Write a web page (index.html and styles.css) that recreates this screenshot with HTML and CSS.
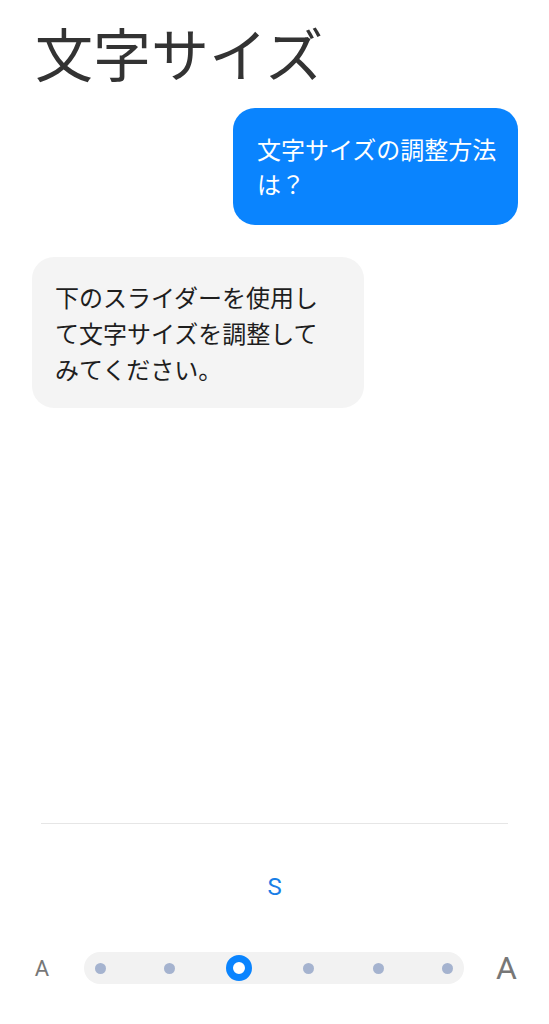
FILE: index.html
```html
<!DOCTYPE html>
<html lang="ja">
<head>
<meta charset="utf-8">
<link rel="stylesheet" href="styles.css">
</head>
<body>
<div class="page">
  <h1 class="title">文字サイズ</h1>
  <div class="chat">
    <div class="bubble bubble-user">文字サイズの調整方法は？</div>
    <div class="bubble bubble-bot">下のスライダーを使用して文字サイズを調整してみてください。</div>
  </div>
  <div class="spacer"></div>
  <div class="footer">
    <div class="divider"></div>
    <div class="size-label">S</div>
    <div class="slider-row">
      <div class="a-small">A</div>
      <div class="track">
        <span class="cell"><span class="dot"></span></span>
        <span class="cell"><span class="dot"></span></span>
        <span class="cell"><span class="knob"></span></span>
        <span class="cell"><span class="dot"></span></span>
        <span class="cell"><span class="dot"></span></span>
        <span class="cell"><span class="dot"></span></span>
      </div>
      <div class="a-large">A</div>
    </div>
  </div>
</div>
</body>
</html>
```
FILE: styles.css
```css
* { box-sizing: border-box; }
html, body { margin: 0; padding: 0; background: #fff; }
body {
  font-family: "Noto Sans CJK JP", "Noto Sans", sans-serif;
  color: #222;
}
.page {
  height: 1024px;
  display: flex;
  flex-direction: column;
}
.title {
  margin: 17px 0 0 35px;
  font-size: 58px;
  line-height: 70px;
  font-weight: 400;
  color: #333;
}
.chat {
  display: flex;
  flex-direction: column;
  padding: 0 31px 0 32px;
  margin-top: 21px;
}
.bubble {
  font-size: 24px;
  border-radius: 22px;
}
.bubble-user {
  align-self: flex-end;
  width: 285px;
  background: #0a84fe;
  color: #fff;
  line-height: 35px;
  padding: 23px 20px 24px 24px;
}
.bubble-bot {
  align-self: flex-start;
  margin-top: 32px;
  width: 332px;
  background: #f4f4f4;
  color: #1e1e1e;
  line-height: 36px;
  padding: 22px 40px 21px 23px;
}
.spacer { flex: 1; }
.footer {
  display: flex;
  flex-direction: column;
  padding-bottom: 40px;
}
.divider {
  margin: 0 41px;
  border-top: 1px solid #e6e6e6;
}
.size-label {
  margin-top: 51px;
  text-align: center;
  font-family: Roboto, "Noto Sans", sans-serif;
  font-size: 24px;
  line-height: 24px;
  color: #1a7ee6;
}
.slider-row {
  margin-top: 53px;
  display: flex;
  align-items: center;
  height: 32px;
}
.a-small, .a-large {
  font-family: Roboto, "Noto Sans", sans-serif;
  color: #777;
  text-align: center;
}
.a-small {
  width: 84px;
  font-size: 22px;
}
.a-large {
  width: 85px;
  font-size: 32px;
}
.track {
  width: 380px;
  height: 32px;
  border-radius: 16px;
  background: #f2f2f2;
  display: flex;
  align-items: center;
  justify-content: space-between;
  padding: 0 3px;
}
.cell {
  width: 26px;
  height: 26px;
  display: flex;
  align-items: center;
  justify-content: center;
}
.dot {
  width: 11px;
  height: 11px;
  border-radius: 50%;
  background: #a5b3cf;
}
.knob {
  width: 26px;
  height: 26px;
  border-radius: 50%;
  border: 7px solid #0a84fe;
  background: #fff;
}
```
